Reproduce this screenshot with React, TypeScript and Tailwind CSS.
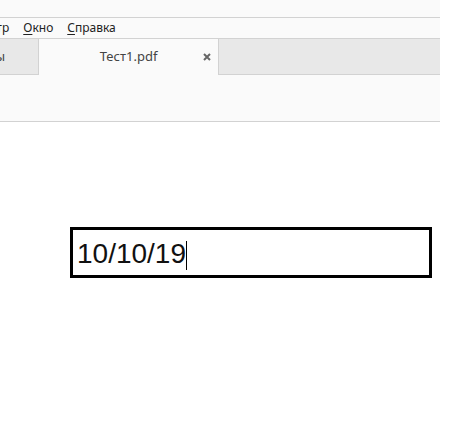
import React from 'react';

const ui = { fontFamily: '"Noto Sans", "Open Sans", sans-serif' };

export default function App() {
  return (
    <div className="w-[459px] h-[427px] bg-white overflow-hidden" style={ui}>
      <div className="w-[440px]">
        {/* title strip */}
        <div className="h-[18px] bg-[#fafafa] border-b border-[#d2d2d2]" />

        {/* menu */}
        <div className="h-[21px] bg-[#fafafa] border-b border-[#d2d2d2] flex items-center overflow-hidden text-[12px] text-[#222] whitespace-nowrap">
          <span className="-ml-[49px]">Просмотр</span>
          <span className="ml-[14px]">
            <span className="underline underline-offset-2">О</span>кно
          </span>
          <span className="ml-[14px]">
            <span className="underline underline-offset-2">С</span>правка
          </span>
        </div>

        {/* tabs */}
        <div className="h-[36px] bg-[#e8e8e8] border-b border-[#d2d2d2] flex">
          <div className="w-[38px] overflow-hidden flex items-center justify-end text-[13px] text-[#444] whitespace-nowrap">
            <span className="mr-[33px]">Документы</span>
          </div>
          <div className="w-[181px] h-[36px] bg-[#fafafa] border-x border-[#d2d2d2] flex items-center relative">
            <span className="flex-1 text-center text-[13px] text-[#444]">Тест1.pdf</span>
            <svg className="absolute left-[164px] top-[14px]" width="8" height="8" viewBox="0 0 8 8">
              <path d="M1 1 L7 7 M7 1 L1 7" stroke="#666" strokeWidth="2" />
            </svg>
          </div>
        </div>

        {/* toolbar */}
        <div className="h-[47px] bg-[#fafafa] border-b border-[#d2d2d2]" />
      </div>

      {/* document */}
      <div className="pt-[105px] pl-[70px]">
        <div className="w-[362px] h-[51px] border-[3px] border-black bg-white flex items-start pl-[4px]">
          <span
            className="mt-[8px] leading-[32px] text-[28px] text-[#111]"
            style={{ fontFamily: '"Liberation Sans", Arial, sans-serif' }}
          >
            10/10/19
          </span>
          <span className="mt-[11px] w-px h-[29px] bg-black" />
        </div>
      </div>
    </div>
  );
}
